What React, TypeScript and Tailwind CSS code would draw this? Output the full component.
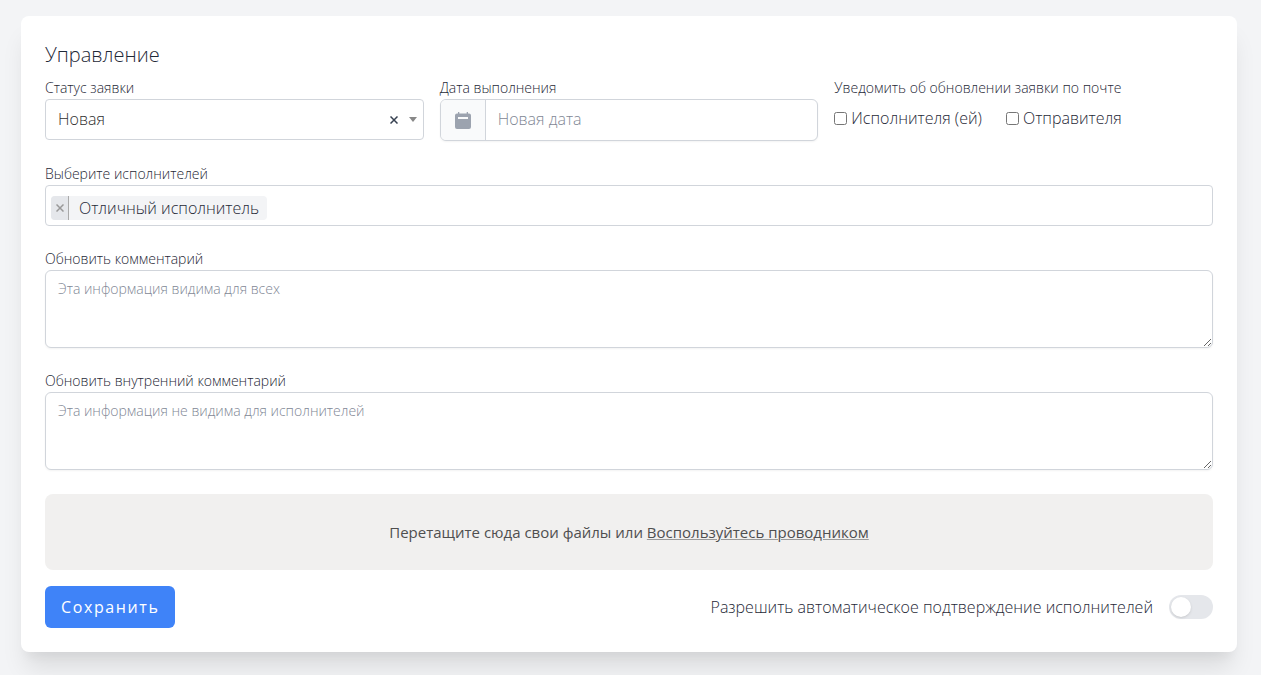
import React, { useState } from 'react';

const FIELD_BORDER = 'border border-[#d1d5db] bg-white';

function FieldLabel({ htmlFor, children }: { htmlFor: string; children: React.ReactNode }) {
  return (
    <label htmlFor={htmlFor} className="block pb-[2px] text-[14px] leading-[18px]">
      {children}
    </label>
  );
}

function CrossIcon({ className }: { className: string }) {
  return (
    <svg viewBox="0 0 8 8" className={className} fill="none" stroke="currentColor" aria-hidden="true">
      <path d="M0.5 0.5L7.5 7.5M7.5 0.5L0.5 7.5" />
    </svg>
  );
}

function CalendarIcon() {
  return (
    <svg viewBox="0 0 16 17" className="h-[17px] w-4" aria-hidden="true">
      <path
        fill="#9ca3af"
        fillRule="evenodd"
        d="M3 0h1.300v1.500h7.400V0H13v1.500h1a2 2 0 0 1 2 2V15a2 2 0 0 1-2 2H2a2 2 0 0 1-2-2V3.500a2 2 0 0 1 2-2h1zM3 5v2h10V5z"
      />
    </svg>
  );
}

function StatusField() {
  const [status, setStatus] = useState('new');
  return (
    <div>
      <FieldLabel htmlFor="status">Статус заявки</FieldLabel>
      <div className="relative">
        <select
          id="status"
          value={status}
          onChange={(e) => setStatus(e.target.value)}
          className={`${FIELD_BORDER} block h-[41px] w-full appearance-none rounded pr-12 pb-[2px] pl-3 text-[16px] text-[#2f2f2f]`}
        >
          <option value="" />
          <option value="new">Новая</option>
        </select>
        <button
          type="button"
          aria-label="Очистить"
          onClick={() => setStatus('')}
          className="absolute top-0 right-6 flex h-full w-3 items-center justify-center text-[#374151]"
        >
          <CrossIcon className="size-2 stroke-[1.5]" />
        </button>
        <svg viewBox="0 0 8 5" className="pointer-events-none absolute top-[18px] right-[7px] h-[5px] w-2" aria-hidden="true">
          <path d="M0 0h8L4 5z" fill="#888888" />
        </svg>
      </div>
    </div>
  );
}

function DateField() {
  return (
    <div>
      <FieldLabel htmlFor="due-date">Дата выполнения</FieldLabel>
      <div className={`${FIELD_BORDER} flex h-[42px] overflow-hidden rounded-md shadow-xs`}>
        <span className="flex w-[45px] shrink-0 items-center justify-center border-r border-[#d1d5db] bg-[#f9fafb]">
          <CalendarIcon />
        </span>
        <input
          id="due-date"
          type="text"
          placeholder="Новая дата"
          className="w-full min-w-0 px-3 pb-[2px] text-[16px] placeholder:text-[#7f8795]"
        />
      </div>
    </div>
  );
}

function NotifyOption({ id, children }: { id: string; children: React.ReactNode }) {
  return (
    <div className="flex items-center gap-1">
      <input id={id} type="checkbox" className="size-[13px]" />
      <label htmlFor={id} className="text-[16px] leading-6">
        {children}
      </label>
    </div>
  );
}

function NotifyField() {
  return (
    <fieldset className="min-w-0">
      <legend className="pb-[2px] text-[14px] leading-[18px]">Уведомить об обновлении заявки по почте</legend>
      <div className="flex flex-wrap gap-x-6 pt-[7px]">
        <NotifyOption id="notify-performer">Исполнителя (ей)</NotifyOption>
        <NotifyOption id="notify-sender">Отправителя</NotifyOption>
      </div>
    </fieldset>
  );
}

function PerformersField() {
  const [performers, setPerformers] = useState(['Отличный исполнитель']);
  return (
    <div>
      <FieldLabel htmlFor="performers">Выберите исполнителей</FieldLabel>
      <div className={`${FIELD_BORDER} flex h-[41px] items-end gap-[5px] rounded px-[5px] pb-[5px]`}>
        {performers.map((name) => (
          <span key={name} className="flex h-6 shrink-0 overflow-hidden rounded bg-[#f3f4f6] text-[16px] leading-6">
            <button
              type="button"
              aria-label={`Убрать: ${name}`}
              onClick={() => setPerformers(performers.filter((p) => p !== name))}
              className="flex w-[18px] items-center justify-center border-r border-[#aaaaaa] bg-[#e5e7eb] text-[#999999]"
            >
              <CrossIcon className="size-2 stroke-[1.5]" />
            </button>
            <span className="pr-2 pl-[10px]">{name}</span>
          </span>
        ))}
        <input id="performers" type="text" className="h-6 min-w-0 flex-1 outline-none" />
      </div>
    </div>
  );
}

function CommentField({ id, label, placeholder }: { id: string; label: string; placeholder: string }) {
  return (
    <div>
      <FieldLabel htmlFor={id}>{label}</FieldLabel>
      <textarea
        id={id}
        rows={3}
        placeholder={placeholder}
        className={`${FIELD_BORDER} block w-full rounded-md px-3 py-2 text-[14px] leading-5 shadow-xs placeholder:text-[#7f8795]`}
      />
    </div>
  );
}

function AutoApproveSwitch() {
  return (
    <label className="flex cursor-pointer items-center gap-4">
      <span className="text-[16px] leading-6">Разрешить автоматическое подтверждение исполнителей</span>
      <input type="checkbox" role="switch" className="peer sr-only" />
      <span className="flex h-6 w-11 shrink-0 items-center rounded-full bg-[#e5e7eb] px-[2px] peer-checked:justify-end peer-checked:bg-[#3f83f8]">
        <span className="size-5 rounded-full bg-white shadow-sm" />
      </span>
    </label>
  );
}

export default function App() {
  return (
    <main className="min-h-screen bg-[#f3f4f6] pt-4 pr-6 pb-[23px] pl-[21px] font-['Open_Sans','Noto_Sans',sans-serif] font-light text-[#1f2937]">
      <form
        className="rounded-lg bg-white p-6 shadow-[0_20px_25px_-5px_rgba(0,0,0,0.1),0_10px_10px_-5px_rgba(0,0,0,0.04)]"
        onSubmit={(e) => e.preventDefault()}
      >
        <h1 className="mb-[9px] text-[20px] leading-[30px]">Управление</h1>
        <div className="flex flex-col gap-6">
          <div className="grid grid-cols-3 gap-4">
            <StatusField />
            <DateField />
            <NotifyField />
          </div>
          <PerformersField />
          <CommentField id="comment" label="Обновить комментарий" placeholder="Эта информация видима для всех" />
          <CommentField
            id="internal-comment"
            label="Обновить внутренний комментарий"
            placeholder="Эта информация не видима для исполнителей"
          />
          <div className="flex min-h-[76px] items-center justify-center rounded-lg bg-[#f1f0ef] px-4 text-center text-[15px] leading-6 font-normal text-[#4f4f4f]">
            <label htmlFor="files">
              Перетащите сюда свои файлы или{' '}
              <span className="cursor-pointer underline decoration-[#9a9a9a] decoration-1">Воспользуйтесь проводником</span>
            </label>
            <input id="files" type="file" multiple className="sr-only" />
          </div>
        </div>
        <div className="mt-4 flex items-center justify-between">
          <button
            type="submit"
            className="h-[42px] rounded-md bg-[#3f83f8] px-4 text-[16px] leading-6 font-medium tracking-widest text-white"
          >
            Сохранить
          </button>
          <AutoApproveSwitch />
        </div>
      </form>
    </main>
  );
}
